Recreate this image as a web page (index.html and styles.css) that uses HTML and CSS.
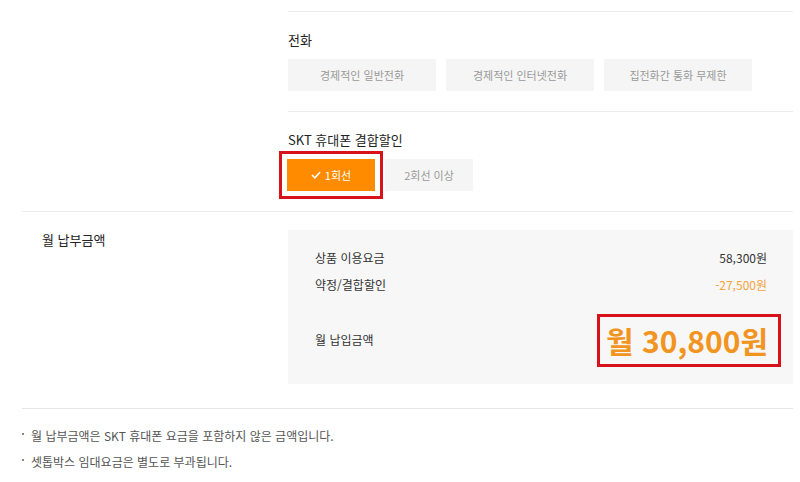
FILE: index.html
```html
<!DOCTYPE html>
<html lang="ko">

<head>
    <meta charset="UTF-8" />
    <meta name="viewport" content="width=device-width, initial-scale=1.0" />
    <title>월 납부금액</title>
    <link rel="stylesheet" href="styles.css">
</head>

<body>
    <div class="page">
        <div class="options">
            <div class="option-group">
                <p class="option-title">전화</p>
                <div class="option-list">
                    <button class="option-btn wide">경제적인 일반전화</button>
                    <button class="option-btn wide">경제적인 인터넷전화</button>
                    <button class="option-btn wide">집전화간 통화 무제한</button>
                </div>
            </div>
            <div class="option-group">
                <p class="option-title">SKT 휴대폰 결합할인</p>
                <div class="option-list">
                    <button class="option-btn is-selected marked">
                        <svg class="check" width="10" height="8" viewBox="0 0 10 8">
                            <polyline points="1,4 3.8,6.8 9,1.2" fill="none" stroke="#fff" stroke-width="1.6" />
                        </svg>
                        1회선
                    </button>
                    <button class="option-btn">2회선 이상</button>
                </div>
            </div>
        </div>

        <div class="summary">
            <p class="summary-title">월 납부금액</p>
            <div class="summary-box">
                <div class="summary-row">
                    <span>상품 이용요금</span>
                    <span>58,300원</span>
                </div>
                <div class="summary-row">
                    <span>약정/결합할인</span>
                    <span class="discount">-27,500원</span>
                </div>
                <div class="summary-row total">
                    <span>월 납입금액</span>
                    <span class="total-price marked-box">월 30,800원</span>
                </div>
            </div>
        </div>

        <ul class="notes">
            <li>월 납부금액은 SKT 휴대폰 요금을 포함하지 않은 금액입니다.</li>
            <li>셋톱박스 임대요금은 별도로 부과됩니다.</li>
        </ul>
    </div>
</body>

</html>
```

FILE: styles.css
```css
body {
    font-family: "Noto Sans CJK KR", "Noto Sans", sans-serif;
    background-color: #fff;
    color: #222;
    margin: 0;
    padding: 0;
}

.page {
    padding-top: 11px;
    width: 793px;
}

p {
    margin: 0;
}

/* option groups */
.options {
    margin-left: 288px;
}

.option-group {
    border-top: 1px solid #ececec;
    padding: 18px 0 20px;
}

.option-title {
    font-size: 13px;
    line-height: 20px;
    margin-bottom: 9px;
}

.option-list {
    display: flex;
    gap: 10px;
}

.option-btn {
    display: flex;
    align-items: center;
    justify-content: center;
    gap: 4px;
    width: 88px;
    height: 32px;
    padding: 0;
    border: none;
    background-color: #f5f5f5;
    color: #999;
    font-family: inherit;
    font-size: 11px;
    cursor: pointer;
}

.option-btn.wide {
    width: 148px;
}

.option-btn.is-selected {
    background-color: #ff8c00;
    color: #fff;
    margin-left: -1px;
}

/* red marker outlines */
.marked {
    outline: 3px solid #d8121b;
    outline-offset: 5px;
}

/* summary */
.summary {
    display: flex;
    margin-left: 22px;
    border-top: 1px solid #ececec;
    border-bottom: 1px solid #e6e6e6;
    padding: 18px 0 24px;
}

.summary-title {
    width: 246px;
    padding-left: 20px;
    font-size: 13px;
    line-height: 20px;
}

.summary-box {
    flex: 1;
    background-color: #f7f7f7;
    padding: 19px 26px 24px 27px;
}

.summary-row {
    display: flex;
    justify-content: space-between;
    align-items: center;
    font-size: 12px;
    line-height: 18px;
    color: #333;
}

.summary-row + .summary-row {
    margin-top: 9px;
}

.summary-row.total {
    margin-top: 26px;
    height: 40px;
}

.discount {
    color: #f5a23c;
}

.total-price {
    font-size: 30px;
    font-weight: bold;
    color: #f29420;
    line-height: 36px;
}

.marked-box {
    border: 3px solid #d8121b;
    padding: 5px 10px 6px 6px;
    margin-right: -14px;
}

/* notes */
.notes {
    list-style: none;
    margin: 0;
    padding: 14px 0 0 22px;
}

.notes li {
    font-size: 12px;
    line-height: 26px;
    color: #555;
}

.notes li::before {
    content: "";
    display: inline-block;
    width: 2px;
    height: 2px;
    background-color: #888;
    vertical-align: 6px;
    margin-right: 7px;
}
```
